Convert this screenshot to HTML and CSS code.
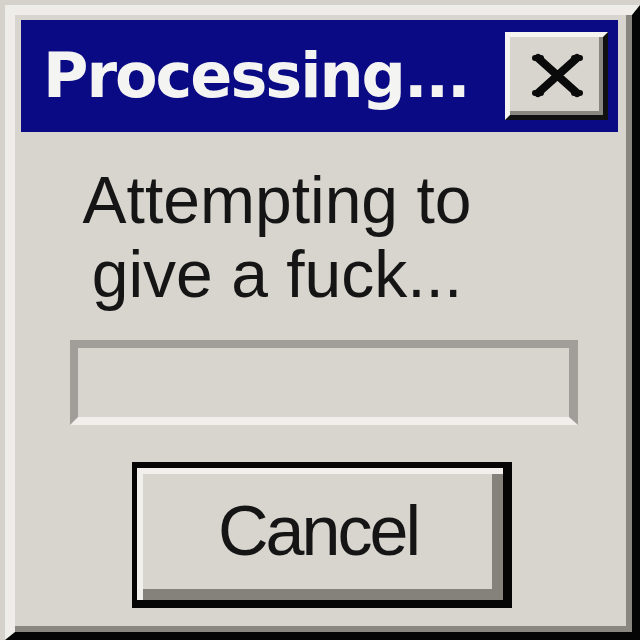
FILE: index.html
```html
<!DOCTYPE html>
<html lang="en">
<head>
    <meta charset="UTF-8">
    <meta name="viewport" content="width=device-width, initial-scale=1.0">
    <title>Processing...</title>
    <link rel="stylesheet" href="styles.css">
</head>
<body>

    <div class="window">
        <!-- Title bar with the close box -->
        <div class="title-bar">
            <span class="title">Processing...</span>
            <button class="close-btn" title="Close">
                <svg width="51" height="45" viewBox="0 0 51 45">
                    <path d="M6 5 L45 40 M45 5 L6 40" stroke="#0a0a0a" stroke-width="8" stroke-linecap="round" fill="none"/>
                    <path d="M3 5 H9 M42 5 H48 M3 40 H9 M42 40 H48" stroke="#0a0a0a" stroke-width="6" stroke-linecap="round"/>
                </svg>
            </button>
        </div>

        <p class="message">Attempting to<br>give a fuck...</p>

        <div class="progress"></div>

        <button class="cancel-btn">Cancel</button>
    </div>

</body>
</html>
```

FILE: styles.css
```css
body {
    margin: 0;
    width: 640px;
    height: 640px;
    overflow: hidden;
    background-color: #d5d1cb;
}
.window {
    box-sizing: border-box;
    width: 635px;
    height: 635px;
    margin: 5px 0 0 5px;
    background-color: #d8d4ce;
    border-top: 10px solid #efede9;
    border-left: 10px solid #efede9;
    border-right: 8px solid #050505;
    border-bottom: 8px solid #050505;
    box-shadow: inset -6px -6px 0 #8a8680;
    overflow: hidden;
}
.title-bar {
    display: flex;
    align-items: center;
    justify-content: space-between;
    height: 112px;
    margin: 5px 14px 0 6px;
    padding-left: 22px;
    padding-right: 10px;
    background-color: #0a0a84;
}
.title {
    font-family: "DejaVu Sans", sans-serif;
    font-weight: bold;
    font-size: 62px;
    line-height: 1;
    letter-spacing: -2px;
    color: #f4f4f2;
}
.close-btn {
    display: flex;
    align-items: center;
    justify-content: center;
    box-sizing: border-box;
    width: 103px;
    height: 88px;
    padding: 0 0 2px 2px;
    background-color: #d8d4ce;
    border-top: 5px solid #f6f4f0;
    border-left: 5px solid #f6f4f0;
    border-right: 5px solid #111;
    border-bottom: 5px solid #111;
    box-shadow: inset -4px -4px 0 #8a8680;
}
.message {
    width: 500px;
    margin: 31px 0 0 12px;
    font-family: "Liberation Sans", Arial, sans-serif;
    font-size: 66px;
    line-height: 74px;
    text-align: center;
    color: #151515;
}
.progress {
    box-sizing: border-box;
    width: 508px;
    height: 85px;
    margin: 29px 0 0 55px;
    border-top: 8px solid #a19e99;
    border-left: 8px solid #a19e99;
    border-right: 9px solid #a19e99;
    border-bottom: 8px solid #f1efeb;
}
.cancel-btn {
    display: block;
    box-sizing: border-box;
    width: 380px;
    height: 146px;
    margin: 37px 0 0 117px;
    padding: 0 4px 6px 0;
    background-color: #d8d4ce;
    border-top: 6px solid #050505;
    border-left: 5px solid #050505;
    border-right: 9px solid #050505;
    border-bottom: 8px solid #050505;
    box-shadow: inset 6px 6px 0 #f2f0ec, inset -11px -11px 0 #85817b;
    font-family: "Liberation Sans", Arial, sans-serif;
    font-size: 70px;
    line-height: 1;
    letter-spacing: -3px;
    color: #151515;
}
```
